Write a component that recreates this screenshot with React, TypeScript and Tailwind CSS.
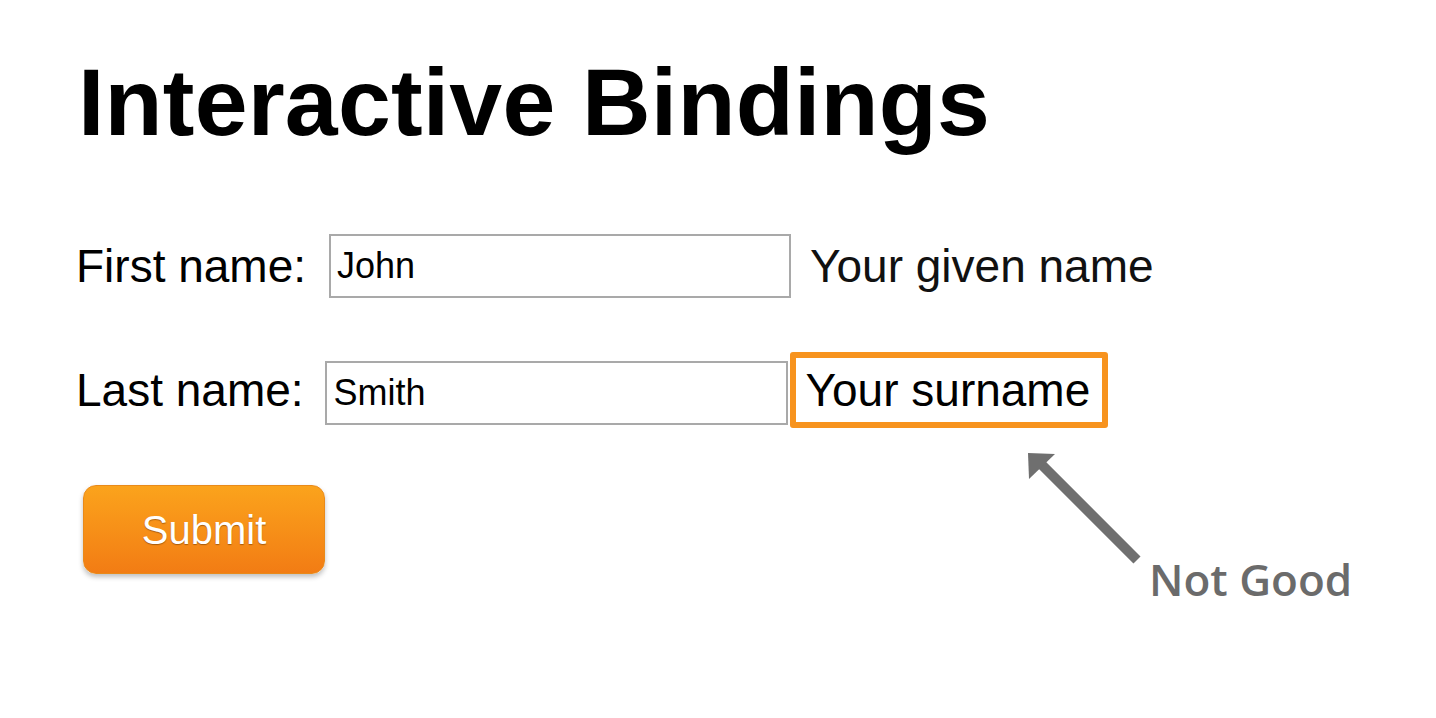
import React from "react";

const sans = { fontFamily: '"Liberation Sans", Arial, sans-serif' };

function Row({
  label,
  value,
  hint,
  highlighted,
}: {
  label: string;
  value: string;
  hint: string;
  highlighted?: boolean;
}) {
  return (
    <div className="flex items-center">
      <label className="text-[46px] leading-none text-black whitespace-nowrap">{label}</label>
      <input
        readOnly
        value={value}
        className={
          highlighted
            ? "ml-[21px] mt-[5px] w-[463px] h-[64px] border-2 border-[#a9a9a9] bg-white pl-[7px] text-[36px] text-black outline-none"
            : "ml-[23px] w-[462px] h-[64px] border-2 border-[#a9a9a9] bg-white pl-[6px] text-[36px] text-black outline-none"
        }
        style={sans}
      />
      {highlighted ? (
        <span className="ml-[2px] border-[6px] border-[#f7931e] rounded-[3px] pl-[10px] pr-[12px] py-[9px] text-[46px] leading-none text-black whitespace-nowrap">
          {hint}
        </span>
      ) : (
        <span className="ml-[19px] text-[46px] leading-none text-[#111] whitespace-nowrap">{hint}</span>
      )}
    </div>
  );
}

export default function App() {
  return (
    <div className="relative w-full h-[718px] bg-white overflow-hidden" style={sans}>
      <div className="flex flex-col pl-[76px] pt-[55px]">
        <h1 className="ml-[2px] text-[95px] font-bold leading-none tracking-[0.2px] text-black">Interactive Bindings</h1>

        <div className="mt-[84px]">
          <Row label="First name:" value="John" hint="Your given name" />
        </div>
        <div className="mt-[54px]">
          <Row label="Last name:" value="Smith" hint="Your surname" highlighted />
        </div>

        <button className="mt-[57px] ml-[7px] w-[242px] h-[89px] rounded-[13px] border border-[#e98a1a] bg-gradient-to-b from-[#fba31c] to-[#f27c14] text-[40px] text-white shadow-[0_3px_5px_rgba(0,0,0,0.25)] [text-shadow:0_1px_1px_rgba(120,60,0,0.6)]">
          Submit
        </button>
      </div>

      {/* annotation */}
      <svg className="absolute left-0 top-0" width="1436" height="718" viewBox="0 0 1436 718">
        <line x1="1137" y1="560" x2="1042" y2="465" stroke="#6f6f6f" strokeWidth="10" />
        <polygon points="1028,453 1055,454 1029,479" fill="#6f6f6f" />
      </svg>
      <span
        className="absolute left-[1149px] top-[557px] text-[44px] font-semibold leading-none text-[#6b6b6b]"
        style={{ fontFamily: '"Open Sans", "DejaVu Sans", sans-serif' }}
      >
        Not Good
      </span>
    </div>
  );
}
